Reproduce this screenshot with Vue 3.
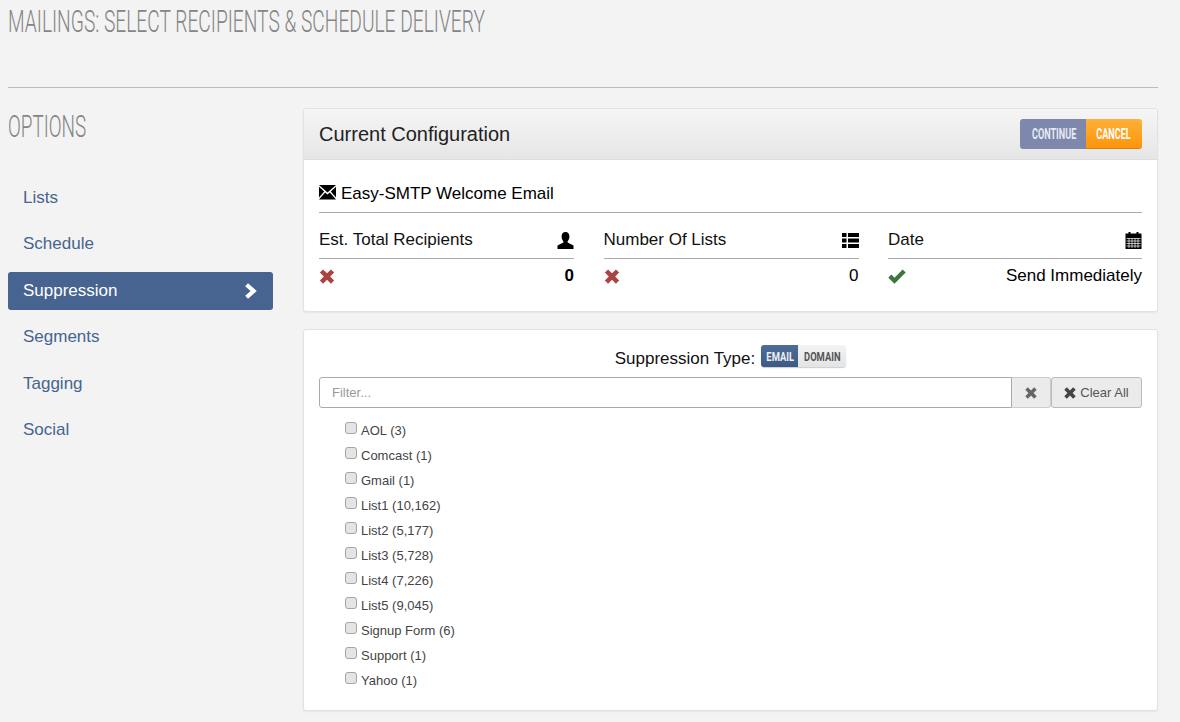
<script setup>
const nav = ['Lists', 'Schedule', 'Suppression', 'Segments', 'Tagging', 'Social']
const items = ['AOL (3)', 'Comcast (1)', 'Gmail (1)', 'List1 (10,162)', 'List2 (5,177)', 'List3 (5,728)', 'List4 (7,226)', 'List5 (9,045)', 'Signup Form (6)', 'Support (1)', 'Yahoo (1)']
const xPath = 'M3.8 0.4 L8 4.6 L12.2 0.4 L15.6 3.8 L11.4 8 L15.6 12.2 L12.2 15.6 L8 11.4 L3.8 15.6 L0.4 12.2 L4.6 8 L0.4 3.8 Z'
</script>

<template>
  <div class="page">
    <h1 class="title"><span>MAILINGS: SELECT RECIPIENTS &amp; SCHEDULE DELIVERY</span></h1>
    <div class="layout">
      <aside class="side">
        <h2 class="opts"><span>OPTIONS</span></h2>
        <nav class="nav">
          <a v-for="n in nav" :key="n" class="nav-item" :class="{ active: n === 'Suppression' }">
            {{ n }}
            <svg v-if="n === 'Suppression'" class="chev" viewBox="0 0 14 16"><path d="M4 0.3 L12.8 8 L4 15.7 L1.2 12.7 L6.6 8 L1.2 3.3 Z" fill="#fff" /></svg>
          </a>
        </nav>
      </aside>
      <main class="main">
        <section class="panel first">
          <header class="phead">
            <div class="ptitle">Current Configuration</div>
            <div class="btns">
              <button class="btn cont"><span>CONTINUE</span></button>
              <button class="btn canc"><span>CANCEL</span></button>
            </div>
          </header>
          <div class="pbody">
            <div class="email">
              <svg class="env" viewBox="0 0 17 15"><path d="M0 0 H17 L8.5 7.4 Z M0 1.8 L5.2 6.6 L0 12.6 Z M17 1.8 V12.6 L11.8 6.6 Z M6.1 7.4 L8.5 9.5 L10.9 7.4 L17 14.4 H0 Z" fill="#000" /></svg>
              Easy-SMTP Welcome Email
            </div>
            <div class="cols">
              <div class="col">
                <div class="chead">Est. Total Recipients
                  <svg class="ic" viewBox="0 0 17 17"><path d="M8.5 0 C11 0 12.4 2 12.4 4.6 C12.4 7 11.3 8.6 10.6 9.4 V10.6 L16.5 13.4 V17 H0.5 V13.4 L6.4 10.6 V9.4 C5.7 8.6 4.6 7 4.6 4.6 C4.6 2 6 0 8.5 0 Z" fill="#000" /></svg>
                </div>
                <div class="cval">
                  <svg class="x" viewBox="0 0 16 16"><path :d="xPath" fill="#a94442" /></svg>
                  <b>0</b>
                </div>
              </div>
              <div class="col">
                <div class="chead">Number Of Lists
                  <svg class="ic" viewBox="0 0 17 15"><path d="M0 0 H4.5 V4 H0 Z M6 0 H17 V4 H6 Z M0 5.5 H4.5 V9.5 H0 Z M6 5.5 H17 V9.5 H6 Z M0 11 H4.5 V15 H0 Z M6 11 H17 V15 H6 Z" fill="#000" /></svg>
                </div>
                <div class="cval">
                  <svg class="x" viewBox="0 0 16 16"><path :d="xPath" fill="#a94442" /></svg>
                  <span>0</span>
                </div>
              </div>
              <div class="col">
                <div class="chead">Date
                  <svg class="ic" viewBox="0 0 16 17"><path d="M3 0 H5 V1.5 H11 V0 H13 V1.5 H16 V17 H0 V1.5 H3 Z" fill="#000" /><path d="M1 6.5 H15 M1 9 H15 M1 11.5 H15 M1 14 H15 M3.5 6.5 V16 M6.5 6.5 V16 M9.5 6.5 V16 M12.5 6.5 V16" stroke="#fff" stroke-width=".7" /></svg>
                </div>
                <div class="cval">
                  <svg class="chk" viewBox="0 0 18 15"><path d="M0.3 8.7 L3.3 5.6 L6.5 8.8 L14.6 0.6 L17.7 3.6 L6.5 14.8 Z" fill="#3c763d" /></svg>
                  <span>Send Immediately</span>
                </div>
              </div>
            </div>
          </div>
        </section>

        <section class="panel second">
          <div class="stype">
            <span>Suppression Type:</span>
            <div class="toggle">
              <span class="tg on"><span>EMAIL</span></span>
              <span class="tg off"><span>DOMAIN</span></span>
            </div>
          </div>
          <div class="filter">
            <input class="finput" placeholder="Filter..." />
            <button class="fbtn sq">
              <svg class="sx" viewBox="0 0 16 16"><path :d="xPath" fill="#666" /></svg>
            </button>
            <button class="fbtn clear">
              <svg class="sx" viewBox="0 0 16 16"><path :d="xPath" fill="#444" /></svg>
              Clear All
            </button>
          </div>
          <ul class="list">
            <li v-for="i in items" :key="i" class="li">
              <span class="cb"></span>
              <span class="lbl">{{ i }}</span>
            </li>
          </ul>
        </section>
      </main>
    </div>
  </div>
</template>

<style>
html, body { background: #f3f3f3; }
</style>

<style scoped>
.page {
  box-sizing: border-box;
  width: 1180px;
  height: 722px;
  padding: 0 22px 0 8px;
  overflow: hidden;
  font-family: "Liberation Sans", Arial, sans-serif;
  background: #f3f3f3;
}
.title {
  margin: 0;
  height: 87px;
  border-bottom: 1px solid #bbb;
  font-family: Roboto, "Liberation Sans", sans-serif;
  font-weight: 300;
  font-size: 31px;
  line-height: 43px;
  color: #858585;
  white-space: nowrap;
}
.title span { display: inline-block; transform-origin: left center; transform: scaleX(0.619); }
.layout { display: flex; gap: 30px; padding-top: 20px; }
.side { width: 265px; flex: none; }
.opts {
  margin: 0 0 32px;
  font-family: Roboto, "Liberation Sans", sans-serif;
  font-weight: 300;
  font-size: 31px;
  line-height: 38px;
  color: #858585;
}
.opts span { display: inline-block; transform-origin: left center; transform: scaleX(0.61); }
.nav { display: flex; flex-direction: column; gap: 8.5px; padding-top: 0.5px; }
.nav-item {
  height: 38px;
  display: flex;
  align-items: center;
  justify-content: space-between;
  padding: 0 15px;
  font-size: 17px;
  color: #46648f;
  border-radius: 3px;
}
.nav-item.active { background: #46648f; color: #fff; }
.chev { width: 14px; height: 16px; }
.main { width: 855px; flex: none; }
.panel {
  background: #fff;
  border: 1px solid #e2e2e2;
  border-radius: 3px;
  box-shadow: 0 1px 2px rgba(0, 0, 0, 0.06);
  box-sizing: border-box;
}
.first { height: 204px; }
.phead {
  height: 51px;
  display: flex;
  align-items: center;
  justify-content: space-between;
  padding: 0 15px;
  background: linear-gradient(#f5f5f5, #e6e6e6);
  border-bottom: 1px solid #ddd;
  box-sizing: border-box;
}
.ptitle { font-size: 20px; color: #222; }
.btns { display: flex; }
.btn {
  height: 30px;
  border: 0;
  padding: 0;
  font-family: Roboto, "Liberation Sans", sans-serif;
  font-weight: 700;
  font-size: 14px;
  color: #fff;
}
.btn span { display: inline-block; white-space: nowrap; transform: scaleX(0.65); }
.tg span { display: inline-block; white-space: nowrap; transform: scaleX(0.72); }
.cont { width: 66px; background: #7e88ad; border-radius: 3px 0 0 3px; color: #e8eaf2; }
.canc { width: 56px; background: linear-gradient(#ffb03a, #fd9508); border-radius: 0 3px 3px 0; border-bottom: 1px solid #d98210; }
.pbody { padding: 15px 15px 0; }
.email {
  height: 38px;
  display: flex;
  align-items: center;
  gap: 5px;
  font-size: 17px;
  color: #000;
  border-bottom: 1px solid #aaa;
  box-sizing: border-box;
}
.env { width: 17px; height: 15px; margin-top: -3px; }
.cols { display: grid; grid-template-columns: 255px 255px 254px; column-gap: 29.5px; }
.chead {
  height: 46px;
  display: flex;
  align-items: center;
  justify-content: space-between;
  font-size: 17px;
  color: #111;
  border-bottom: 1px solid #aaa;
  box-sizing: border-box;
  padding-top: 9px;
}
.ic { width: 17px; height: 17px; }
.cval {
  height: 34px;
  display: flex;
  align-items: center;
  justify-content: space-between;
  font-size: 17px;
  color: #000;
}
.x { width: 16px; height: 15px; }
.chk { width: 18px; height: 15px; }
.second { margin-top: 17px; height: 382px; padding: 0 15px; }
.stype {
  height: 47px;
  display: flex;
  align-items: center;
  justify-content: center;
  gap: 6px;
  font-size: 17px;
  color: #111;
  padding-top: 11px;
  box-sizing: border-box;
}
.toggle { display: flex; height: 22px; border-radius: 3px; overflow: hidden; box-shadow: 0 1px 1px rgba(0, 0, 0, 0.2); margin-top: -6px; }
.tg {
  display: flex;
  align-items: center;
  justify-content: center;
  font-family: Roboto, "Liberation Sans", sans-serif;
  font-weight: 700;
  font-size: 13px;
}
.on { width: 37px; background: linear-gradient(#4d6c98, #3d5a86); color: #f1f1f1; }
.off { width: 48px; background: linear-gradient(#f3f3f3, #e4e4e4); color: #555; }
.filter { display: flex; height: 31px; }
.finput {
  flex: 1;
  min-width: 0;
  box-sizing: border-box;
  border: 1px solid #aaa;
  border-radius: 3px 0 0 3px;
  padding: 0 12px;
  font-family: inherit;
  font-size: 13px;
  outline: none;
}
.finput::placeholder { color: #999; }
.fbtn {
  box-sizing: border-box;
  display: flex;
  align-items: center;
  justify-content: center;
  gap: 4px;
  border: 1px solid #ccc;
  background: #ebebeb;
  font-family: inherit;
  font-size: 13px;
  color: #555;
  padding: 0;
}
.sq { width: 39px; border-left: 0; border-radius: 0 3px 3px 0; }
.clear { width: 91px; margin-right: 0; border-radius: 3px; border-color: #bbb; }
.sx { width: 12px; height: 12px; }
.list { list-style: none; margin: 9.5px 0 0; padding: 0 0 0 26px; }
.li { height: 25px; display: flex; align-items: center; gap: 4px; font-size: 13px; color: #444; }
.cb {
  width: 12px;
  height: 12px;
  box-sizing: border-box;
  background: #e4e4e4;
  border: 1px solid #a5a5a5;
  border-radius: 3px;
  margin-top: -4px;
}
</style>
